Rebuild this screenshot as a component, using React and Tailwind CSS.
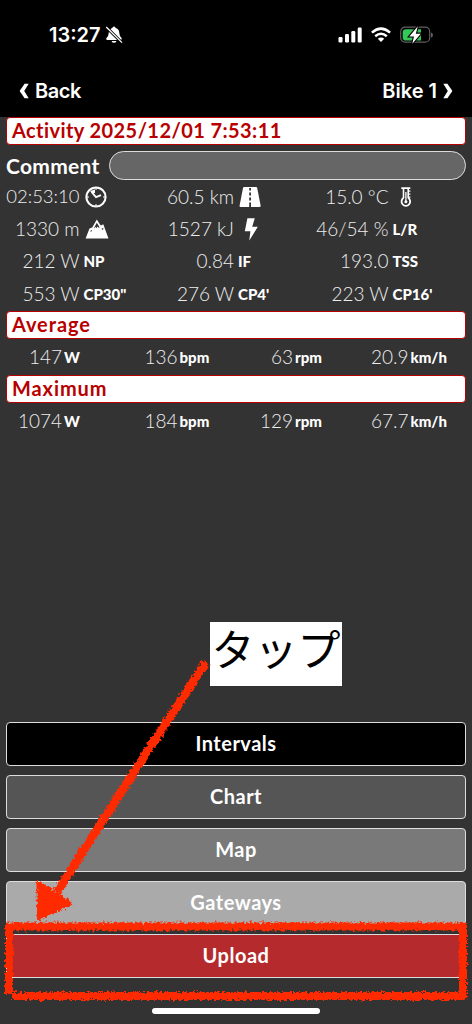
const ClockIcon = () => (
  <svg width="22" height="22" viewBox="0 0 22 22" fill="none" stroke="currentColor">
    <circle cx="11" cy="11" r="9.6" strokeWidth="2" />
    <path d="M6.5 6L11 11.2L16 9.2" strokeWidth="1.8" />
    <path d="M11 2V4M11 18V20M2 11H4M18 11H20" strokeWidth="1" />
    <path d="M5 5L8 8L10 6.8V3.5Z" fill="currentColor" stroke="none" />
  </svg>
);

const RoadIcon = () => (
  <svg width="22" height="20" viewBox="0 0 22 20">
    <path d="M5.3 0H17.2Q18 0 18.2 1L21.6 18.6Q21.8 20 20.5 20H1.6Q.4 20 .6 18.6L4 1Q4.2 0 5.3 0Z" fill="currentColor" />
    <path d="M11.1 1V3.5M11.1 5.5V8.5M11.1 10.5V13.5M11.1 15.5V20" stroke="#333" strokeWidth="1.8" />
  </svg>
);

const ThermoIcon = () => (
  <svg width="22" height="20" viewBox="0 0 22 20" fill="none" stroke="currentColor">
    <path d="M7.3 1.1H16.3M9.5 1V11M14.2 1V11" strokeWidth="1.6" />
    <path d="M9.7 10.8A4.3 4.3 0 1 0 14 10.8" strokeWidth="1.8" />
    <path d="M11.9 5V14" strokeWidth="1.3" />
    <path d="M14.2 4.2H16.4M14.2 7.2H16.4M14.2 10.2H16.4" strokeWidth="1.3" />
    <circle cx="11.9" cy="14.8" r="1.5" fill="currentColor" stroke="none" />
  </svg>
);

const MountainIcon = () => (
  <svg width="24" height="20" viewBox="0 0 24 20">
    <path d="M.6 19.5L4.5 9.5L7.2 8.5L11.8 .6L15 5.5L16 6.5L18.3 5.3L20 10L23.5 19.5Z" fill="currentColor" />
    <path d="M9.4 8.3L11.8 3.8L14.2 7.6L14.4 9.6L12.6 7.4L11.3 9.3L10.5 7.8L8.9 10Z" fill="#333" />
    <path d="M5 12.5L6.4 10.8L7 12.3ZM16.4 10L18.4 8.7L18 11Z" fill="#333" />
  </svg>
);

const BoltIcon = () => (
  <svg width="22" height="23" viewBox="0 0 22 23">
    <path d="M8.4 .3H15.8L13.2 8.8H18.8L10.3 22.5L11.4 13.2H5.8Z" fill="currentColor" />
  </svg>
);

const BellOffIcon = () => (
  <svg width="18" height="18" viewBox="0 0 18 18">
    <path d="M9 .5Q10.4 .5 10.7 2Q14.2 3 14.3 7Q14.5 10.6 16.7 12.3Q17 14 15.7 14H2.2Q.8 14 1.3 12.3Q3.6 10.5 3.7 7Q3.9 3 7.3 2Q7.6 .5 9 .5ZM6.5 14.9H11.5Q10.8 16.8 9 16.8T6.5 14.9Z" fill="white" />
    <path d="M1.8 1.6L17 16.8" stroke="black" strokeWidth="3" />
    <path d="M1.2 1L17 16.6" stroke="white" strokeWidth="1.3" />
  </svg>
);

const stats = [
  [
    { value: '02:53:10', icon: <ClockIcon />, small: true },
    { value: '60.5 km', icon: <RoadIcon /> },
    { value: '15.0 °C', icon: <ThermoIcon /> },
  ],
  [
    { value: '1330 m', icon: <MountainIcon /> },
    { value: '1527 kJ', icon: <BoltIcon /> },
    { value: '46/54 %', unit: 'L/R' },
  ],
  [
    { value: '212 W', unit: 'NP' },
    { value: '0.84', unit: 'IF' },
    { value: '193.0', unit: 'TSS' },
  ],
  [
    { value: '553 W', unit: 'CP30"' },
    { value: '276 W', unit: "CP4'" },
    { value: '223 W', unit: "CP16'" },
  ],
];

const average = [
  { value: '147', unit: 'W' },
  { value: '136', unit: 'bpm' },
  { value: '63', unit: 'rpm' },
  { value: '20.9', unit: 'km/h' },
];

const maximum = [
  { value: '1074', unit: 'W' },
  { value: '184', unit: 'bpm' },
  { value: '129', unit: 'rpm' },
  { value: '67.7', unit: 'km/h' },
];

const buttons = [
  { label: 'Intervals', color: 'bg-black' },
  { label: 'Chart', color: 'bg-[#555]' },
  { label: 'Map', color: 'bg-[#797979]' },
  { label: 'Gateways', color: 'bg-[#aaa]' },
  { label: 'Upload', color: 'bg-[#b52a2c]' },
];

const SectionTitle = ({ children, className = 'tracking-[0.9px]' }) => (
  <h2
    className={`mx-1.5 h-7 rounded-[4px] border-[1.5px] border-[#b80000] bg-white pl-[5px] text-[20px] leading-[25px] font-bold text-[#b80000] ${className}`}
  >
    {children}
  </h2>
);

const SummaryRow = ({ items }) => (
  <div className="flex h-9 items-center">
    {items.map((item) => (
      <div key={item.unit} className="flex w-[115.5px] items-center">
        <span className="w-[62px] shrink-0 pt-px text-right text-[19px] font-light text-[#eee]">{item.value}</span>
        <span className="ml-[2px] text-[15px] font-black">{item.unit}</span>
      </div>
    ))}
  </div>
);

const StatusBar = () => (
  <div className="flex h-[70px] items-center justify-between pr-[39px] pl-[49px]">
    <div className="flex items-center gap-[4px]">
      <span className="font-['Inter'] text-[20px] leading-6 font-semibold">13:27</span>
      <BellOffIcon />
    </div>
    <div className="flex items-center">
      <svg width="25" height="16" viewBox="0 0 25 16" fill="white">
        <rect x="0.5" y="10" width="4" height="5.5" rx="1.2" />
        <rect x="7" y="7" width="4" height="8.5" rx="1.2" />
        <rect x="13.3" y="4" width="4" height="11.5" rx="1.2" />
        <rect x="19.7" y="0.5" width="4" height="15" rx="1.2" />
      </svg>
      <svg className="ml-2" width="20" height="16" viewBox="0 0 20 16" fill="none" stroke="white" strokeWidth="2.5">
        <path d="M.9 5.6Q10-2.4 19.1 5.6M4.2 9.2Q10 4.2 15.8 9.2" />
        <path d="M6.8 11.8Q10 9.2 13.2 11.8L10 15Z" fill="white" stroke="none" />
      </svg>
      <svg className="ml-[9px]" width="33" height="18" viewBox="0 0 33 18">
        <rect x="0.7" y="1.2" width="29" height="15" rx="4.5" fill="none" stroke="#606060" strokeWidth="1.2" />
        <path d="M31 6.5Q33 7 33 9T31 11.5Z" fill="#606060" />
        <path d="M6 3.2H21V14.6H6Q2.7 14.6 2.7 11.5V6.3Q2.7 3.2 6 3.2Z" fill="#34c759" />
        <path d="M17.8 .3L9.3 10.5H14L12.3 17.7L20.8 7.7H15.8Z" fill="white" stroke="black" strokeWidth="2.2" paintOrder="stroke" />
      </svg>
    </div>
  </div>
);

// hand-drawn arrow and frame over the Upload button
const Marker = () => (
  <svg className="pointer-events-none absolute inset-0" width="472" height="1024" viewBox="0 0 472 1024">
    <defs>
      <filter id="crayon" x="0" y="0" width="472" height="1024" filterUnits="userSpaceOnUse">
        <feTurbulence type="fractalNoise" baseFrequency="0.4" numOctaves="3" seed="4" result="noise" />
        <feDisplacementMap in="SourceGraphic" in2="noise" scale="6" xChannelSelector="R" yChannelSelector="G" />
      </filter>
    </defs>
    <g filter="url(#crayon)" stroke="#ff2a00" strokeLinejoin="round">
      <path d="M206 662L160 732L105 817L57 892" fill="none" strokeWidth="8.5" />
      <path d="M38.5 883L70.5 903.5L39 918Z" fill="#ff2a00" strokeWidth="4" />
      <path d="M6 926.5H463V996H12M9 926V994" fill="none" strokeWidth="8" />
    </g>
  </svg>
);

export default function App() {
  return (
    <div className="relative flex h-[1024px] w-[472px] flex-col overflow-hidden bg-[#333] font-['Lato',sans-serif] text-white">
      <header className="h-[117px] shrink-0 bg-black">
        <StatusBar />
        <nav className="flex h-[42px] items-center justify-between px-[19px] font-['Inter'] text-[20px] font-semibold">
          <button className="flex items-center gap-[6px] tracking-[-0.4px]">
            <svg width="10" height="16" viewBox="0 0 10 16" fill="white">
              <path d="M5.6 .8H9.7L5.2 8L9.7 15.2H5.6L.6 8Z" />
            </svg>
            Back
          </button>
          <button className="flex items-center gap-[6px]">
            Bike 1
            <svg width="10" height="16" viewBox="0 0 10 16" fill="white">
              <path d="M4.4 .8H.3L4.8 8L.3 15.2H4.4L9.4 8Z" />
            </svg>
          </button>
        </nav>
      </header>

      <SectionTitle className="tracking-[0.42px]">Activity 2025/12/01 7:53:11</SectionTitle>
      <div className="flex h-[35px] items-end justify-between px-1.5">
        <label className="text-[21px] leading-[29px] font-bold tracking-[0.3px]">Comment</label>
        <div className="h-[29px] w-[357px] rounded-full border-[1.5px] border-[#ddd] bg-[#666]" />
      </div>

      <div className="mt-px mb-px flex flex-col">
        {stats.map((row, i) => (
          <div key={i} className="flex h-[32.25px] items-center">
            {row.map((stat) => (
              <div key={stat.value} className="flex w-[154.5px] items-center">
                <span
                  className={`w-[79.5px] shrink-0 text-right font-light text-[#eee] ${
                    stat.small ? 'text-[18.5px]' : 'text-[19px]'
                  }`}
                >
                  {stat.value}
                </span>
                {stat.icon ? (
                  <span className="ml-[5px]">{stat.icon}</span>
                ) : (
                  <span className="ml-[4px] text-[15px] font-black">{stat.unit}</span>
                )}
              </div>
            ))}
          </div>
        ))}
      </div>

      <SectionTitle>Average</SectionTitle>
      <SummaryRow items={average} />
      <SectionTitle>Maximum</SectionTitle>
      <SummaryRow items={maximum} />

      <div className="mt-auto mb-[46px] flex flex-col gap-[9px] px-1.5">
        {buttons.map((button) => (
          <button
            key={button.label}
            className={`h-11 rounded-[4px] border-[1.5px] border-[#ddd] pb-0.5 text-[20px] font-bold tracking-[0.5px] ${button.color}`}
          >
            {button.label}
          </button>
        ))}
      </div>

      <div className="absolute top-[622px] left-[210px] flex h-16 w-[132px] items-center justify-center bg-white pb-[13px] font-['Noto_Sans_CJK_JP',sans-serif] text-[43px] leading-none text-black">
        タップ
      </div>
      <Marker />
      <div className="absolute bottom-[10px] left-[152px] h-1.5 w-[168px] rounded-full bg-white" />
    </div>
  );
}
